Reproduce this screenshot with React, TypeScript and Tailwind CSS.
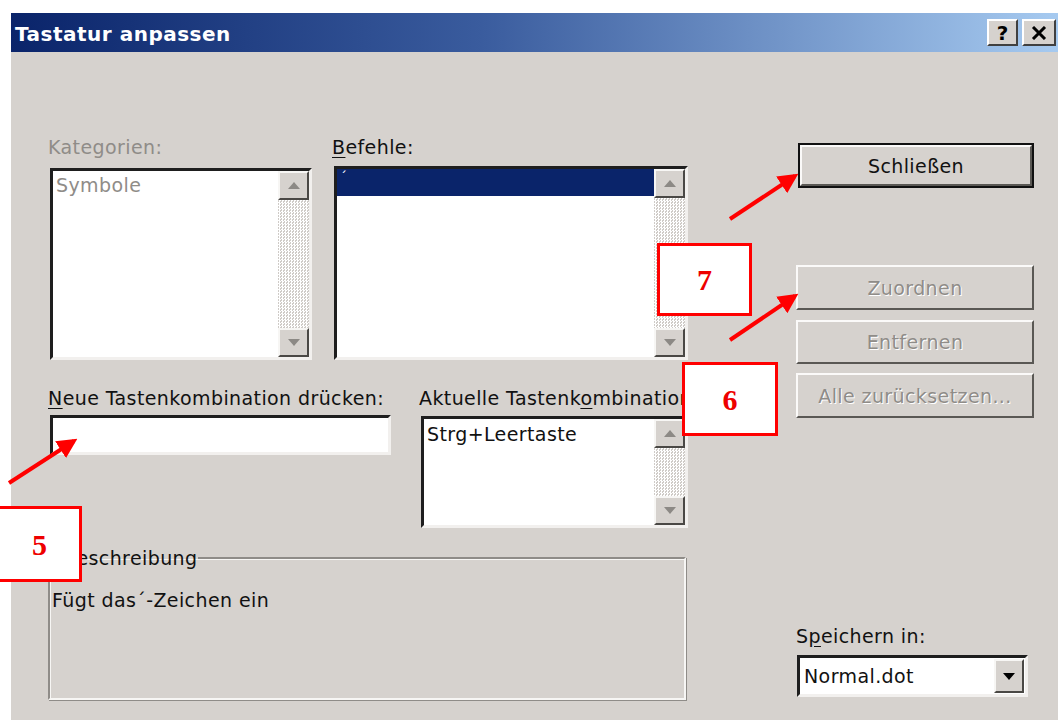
import React from "react";

const ui = { fontFamily: '"DejaVu Sans", "Liberation Sans", sans-serif' };

function Arrow({ dir }: { dir: "up" | "down" }) {
  return (
    <svg width="12" height="7" viewBox="0 0 12 7">
      {dir === "up" ? <polygon points="6,0 12,7 0,7" fill="#8c8985" /> : <polygon points="0,0 12,0 6,7" fill="#8c8985" />}
    </svg>
  );
}

function ScrollButton({ dir }: { dir: "up" | "down" }) {
  return (
    <div className="flex h-[29px] items-center justify-center border-2 border-t-[#f7f6f4] border-l-[#f7f6f4] border-r-[#4a4845] border-b-[#4a4845] bg-[#d6d2ce]">
      <Arrow dir={dir} />
    </div>
  );
}

function ScrollBar() {
  return (
    <div className="flex w-[31px] shrink-0 flex-col">
      <ScrollButton dir="up" />
      <div className="flex-1 bg-[repeating-conic-gradient(#ffffff_0_25%,#cfcbc7_0_50%)] bg-[length:3px_3px]" />
      <ScrollButton dir="down" />
    </div>
  );
}

// sunken white list box with a vertical scroll bar on the right
function ListBox({ className, children }: { className: string; children?: React.ReactNode }) {
  return (
    <div className={`flex border-[3px] border-t-[#1e1e1e] border-l-[#1e1e1e] border-r-[#f2f0ee] border-b-[#f2f0ee] bg-white ${className}`}>
      <div className="min-w-0 flex-1">{children}</div>
      <ScrollBar />
    </div>
  );
}

function Btn({ label, disabled, isDefault, className = "" }: { label: string; disabled?: boolean; isDefault?: boolean; className?: string }) {
  return (
    <div className={`${isDefault ? "border-2 border-[#111]" : ""} ${className}`}>
      <div className="flex h-full items-center justify-center border-2 border-t-[#fbfaf9] border-l-[#fbfaf9] border-r-[#5a5854] border-b-[#5a5854] bg-[#d6d2ce]">
        <span className={`text-[19px] ${disabled ? "text-[#8f8c88] [text-shadow:1px_1px_0_#fff]" : "text-[#111]"}`}>{label}</span>
      </div>
    </div>
  );
}

function Badge({ n, className }: { n: string; className: string }) {
  return (
    <div className={`absolute flex items-center justify-center border-[3px] border-[#ff0000] bg-white ${className}`}>
      <span className="text-[30px] font-bold tracking-normal text-[#ee0000]" style={{ fontFamily: '"Liberation Serif", serif' }}>
        {n}
      </span>
    </div>
  );
}

export default function App() {
  return (
    <div className="relative h-[720px] w-[1058px] overflow-hidden bg-white pl-[11px] pt-[13px]" style={ui}>
      <div className="flex h-full w-[1047px] flex-col bg-[#d6d2ce]">
        {/* title bar */}
        <div className="flex h-[39px] shrink-0 items-center justify-between bg-[linear-gradient(90deg,#0a246a_0%,#3a5c9e_45%,#a6caf0_100%)] pl-[4px] pr-[2px]">
          <span className="pt-[3px] text-[20px] font-bold tracking-[0.5px] text-white">Tastatur anpassen</span>
          <div className="flex gap-[4px]">
            <div className="flex h-[27px] w-[31px] items-center justify-center border-2 border-t-white border-l-white border-r-[#404040] border-b-[#404040] bg-[#d6d2ce] text-[20px] font-bold leading-none text-black">?</div>
            <div className="flex h-[27px] w-[34px] items-center justify-center border-2 border-t-white border-l-white border-r-[#404040] border-b-[#404040] bg-[#d6d2ce]">
              <svg width="16" height="14" viewBox="0 0 16 14">
                <path d="M2 1 L14 13 M14 1 L2 13" stroke="#000" strokeWidth="3" />
              </svg>
            </div>
          </div>
        </div>

        {/* body */}
        <div className="flex flex-1 pl-[37px] pt-[85px] text-[19px] leading-[20px] tracking-[0.4px] text-[#111]">
          <div className="flex w-[640px] flex-col">
            <div className="flex">
              <div className="w-[264px]">
                <div className="h-[20px] text-[#8f8c88]">Kategorien:</div>
                <ListBox className="ml-[2px] mt-[11px] h-[192px] w-[262px]">
                  <div className="pl-[3px] pt-[4px] text-[#8f8c88]">Symbole</div>
                </ListBox>
              </div>
              <div className="ml-[20px] w-[356px]">
                <div className="h-[20px]">
                  <span className="underline underline-offset-[3px]">B</span>efehle:
                </div>
                <ListBox className="ml-[2px] mt-[9px] h-[194px] w-[354px]">
                  <div className="h-[27px] bg-[#0a246a] pl-[3px] pt-[1px] text-[14px] leading-[14px] text-white">´</div>
                </ListBox>
              </div>
            </div>

            <div className="mt-[28px] flex">
              <div className="w-[371px]">
                <div className="h-[20px] whitespace-nowrap">
                  <span className="underline underline-offset-[3px]">N</span>eue Tastenkombination drücken:
                </div>
                <div className="ml-[2px] mt-[7px] h-[40px] w-[341px] border-[3px] border-t-[#1e1e1e] border-l-[#1e1e1e] border-r-[#f2f0ee] border-b-[#f2f0ee] bg-white" />
              </div>
              <div className="w-[269px]">
                <div className="h-[20px] whitespace-nowrap">
                  Aktuelle Tastenk<span className="underline underline-offset-[3px]">o</span>mbinationen:
                </div>
                <ListBox className="ml-[2px] mt-[8px] h-[112px] w-[267px]">
                  <div className="pl-[3px] pt-[5px]">Strg+Leertaste</div>
                </ListBox>
              </div>
            </div>

            <fieldset className="mt-[20px] h-[152px] w-[638px] border-2 border-t-[#8f8c88] border-l-[#8f8c88] border-r-[#f7f6f4] border-b-[#f7f6f4] pl-[2px] pt-[22px] shadow-[inset_1px_1px_0_#f7f6f4,1px_1px_0_#8f8c88]">
              <legend className="ml-[10px] h-[20px] px-[1px]">Beschreibung</legend>
              <div>Fügt das´-Zeichen ein</div>
            </fieldset>
          </div>

          <div className="ml-[108px] flex w-[238px] flex-col">
            <Btn label="Schließen" isDefault className="ml-[2px] mt-[6px] h-[45px] w-[236px]" />
            <Btn label="Zuordnen" disabled className="mt-[77px] h-[45px] w-[238px]" />
            <Btn label="Entfernen" disabled className="mt-[10px] h-[44px] w-[238px]" />
            <Btn label="Alle zurücksetzen..." disabled className="mt-[9px] h-[45px] w-[238px]" />

            <div className="mt-[208px] h-[20px]">
              S<span className="underline underline-offset-[3px]">p</span>eichern in:
            </div>
            <div className="ml-[1px] mt-[9px] flex h-[42px] w-[231px] items-center border-[3px] border-t-[#1e1e1e] border-l-[#1e1e1e] border-r-[#f2f0ee] border-b-[#f2f0ee] bg-white pr-[1px]">
              <span className="flex-1 pl-[4px]">Normal.dot</span>
              <div className="flex h-[34px] w-[30px] items-center justify-center border-2 border-t-[#f7f6f4] border-l-[#f7f6f4] border-r-[#4a4845] border-b-[#4a4845] bg-[#d6d2ce]">
                <svg width="12" height="7" viewBox="0 0 12 7">
                  <polygon points="0,0 12,0 6,7" fill="#000" />
                </svg>
              </div>
            </div>
          </div>
        </div>
      </div>

      {/* red step markers */}
      <Badge n="7" className="left-[657px] top-[243px] h-[73px] w-[95px]" />
      <Badge n="6" className="left-[682px] top-[362px] h-[74px] w-[96px]" />
      <Badge n="5" className="left-[-3px] top-[506px] h-[76px] w-[85px]" />

      <svg className="pointer-events-none absolute left-0 top-0" width="1058" height="720" viewBox="0 0 1058 720">
        <defs>
          <marker id="head" markerWidth="5" markerHeight="5" refX="4" refY="2.5" orient="auto">
            <polygon points="0,0 5,2.5 0,5" fill="#ff0000" />
          </marker>
        </defs>
        <line x1="730" y1="219" x2="795" y2="176" stroke="#ff0000" strokeWidth="4" markerEnd="url(#head)" />
        <line x1="730" y1="340" x2="795" y2="296" stroke="#ff0000" strokeWidth="4" markerEnd="url(#head)" />
        <line x1="9" y1="483" x2="74" y2="441" stroke="#ff0000" strokeWidth="4" markerEnd="url(#head)" />
      </svg>
    </div>
  );
}
